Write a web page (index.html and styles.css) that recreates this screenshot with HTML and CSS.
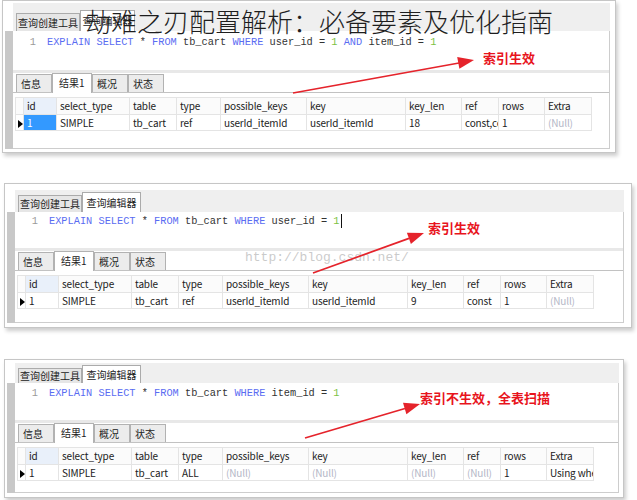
FILE: index.html
```html
<!DOCTYPE html>
<html lang="zh">
<head>
<meta charset="utf-8">
<link rel="stylesheet" href="styles.css">
</head>
<body>
<div class="page">
  <section class="panel p1">
    <div class="tabbar"><span class="tab">查询创建工具</span><span class="tab active">查询编辑器</span></div>
    <div class="side"></div>
    <div class="main">
      <div class="editor"><span class="ln">1</span><span class="code"><b>EXPLAIN</b> <b>SELECT</b> * <b>FROM</b> tb_cart <b>WHERE</b> user_id = <em>1</em> <b>AND</b> item_id = <em>1</em></span></div>
      <div class="rtabs"><span class="rtab">信息</span><span class="rtab active">结果1</span><span class="rtab">概况</span><span class="rtab">状态</span></div>
      <table class="grid">
        <colgroup><col class="c-ind"><col class="c-id"><col class="c-st"><col class="c-tb"><col class="c-ty"><col class="c-pk"><col class="c-key"><col class="c-kl"><col class="c-ref"><col class="c-rows"><col class="c-ex"></colgroup>
        <tr class="hd"><th></th><th class="idh">id</th><th>select_type</th><th>table</th><th>type</th><th>possible_keys</th><th>key</th><th>key_len</th><th>ref</th><th>rows</th><th>Extra</th></tr>
        <tr><td class="ind"><i class="tri"></i></td><td class="sel">1</td><td>SIMPLE</td><td>tb_cart</td><td>ref</td><td>userId_itemId</td><td>userId_itemId</td><td>18</td><td>const,const</td><td>1</td><td class="null">(Null)</td></tr>
      </table>
    </div>
  </section>

  <section class="panel p2">
    <div class="tabbar"><span class="tab">查询创建工具</span><span class="tab active">查询编辑器</span></div>
    <div class="side"></div>
    <div class="main">
      <div class="editor"><span class="ln">1</span><span class="code"><b>EXPLAIN</b> <b>SELECT</b> * <b>FROM</b> tb_cart <b>WHERE</b> user_id = <em>1</em></span><span class="caret"></span></div>
      <div class="rtabs"><span class="rtab">信息</span><span class="rtab active">结果1</span><span class="rtab">概况</span><span class="rtab">状态</span></div>
      <table class="grid">
        <colgroup><col class="c-ind"><col class="c-id"><col class="c-st"><col class="c-tb"><col class="c-ty"><col class="c-pk"><col class="c-key"><col class="c-kl"><col class="c-ref"><col class="c-rows"><col class="c-ex"></colgroup>
        <tr class="hd"><th></th><th class="idh">id</th><th>select_type</th><th>table</th><th>type</th><th>possible_keys</th><th>key</th><th>key_len</th><th>ref</th><th>rows</th><th>Extra</th></tr>
        <tr><td class="ind"><i class="tri"></i></td><td>1</td><td>SIMPLE</td><td>tb_cart</td><td>ref</td><td>userId_itemId</td><td>userId_itemId</td><td>9</td><td>const</td><td>1</td><td class="null">(Null)</td></tr>
      </table>
    </div>
  </section>

  <section class="panel p3">
    <div class="tabbar"><span class="tab">查询创建工具</span><span class="tab active">查询编辑器</span></div>
    <div class="side"></div>
    <div class="main">
      <div class="editor"><span class="ln">1</span><span class="code"><b>EXPLAIN</b> <b>SELECT</b> * <b>FROM</b> tb_cart <b>WHERE</b> item_id = <em>1</em></span></div>
      <div class="rtabs"><span class="rtab">信息</span><span class="rtab active">结果1</span><span class="rtab">概况</span><span class="rtab">状态</span></div>
      <table class="grid">
        <colgroup><col class="c-ind"><col class="c-id"><col class="c-st"><col class="c-tb"><col class="c-ty"><col class="c-pk"><col class="c-key"><col class="c-kl"><col class="c-ref"><col class="c-rows"><col class="c-ex"></colgroup>
        <tr class="hd"><th></th><th class="idh">id</th><th>select_type</th><th>table</th><th>type</th><th>possible_keys</th><th>key</th><th>key_len</th><th>ref</th><th>rows</th><th>Extra</th></tr>
        <tr><td class="ind"><i class="tri"></i></td><td>1</td><td>SIMPLE</td><td>tb_cart</td><td>ALL</td><td class="null">(Null)</td><td class="null">(Null)</td><td class="null">(Null)</td><td class="null">(Null)</td><td>1</td><td>Using where</td></tr>
      </table>
    </div>
  </section>

  <div class="watermark">http://blog.csdn.net/</div>

  <svg class="arrows" width="637" height="500" viewBox="0 0 637 500">
    <line x1="293" y1="93" x2="459" y2="63" />
    <polygon points="474,60 459.4,68.8 457.2,57" />
    <line x1="313" y1="273" x2="409" y2="238.4" />
    <polygon points="424,233 410.9,244.1 406.9,232.8" />
    <line x1="305" y1="438" x2="405" y2="408.5" />
    <polygon points="420,404 406.4,414.3 403,402.7" />
  </svg>

  <span class="note n1">索引生效</span>
  <span class="note n2">索引生效</span>
  <span class="note n3">索引不生效，全表扫描</span>

  <h1 class="title">劫难之刃配置解析：必备要素及优化指南</h1>
</div>
</body>
</html>
```

FILE: styles.css
```css
* { box-sizing: border-box; margin: 0; padding: 0; }
html, body { width: 637px; height: 500px; overflow: hidden; background: #fff; }
body {
  font-family: "Noto Sans CJK SC", "Noto Sans", sans-serif;
  color: #222;
}
.page {
  position: relative;
  width: 637px;
  height: 500px;
  display: flex;
  flex-direction: column;
  align-items: flex-start;
}

/* ---------- panel ---------- */
.panel {
  display: grid;
  grid-template-columns: 8px 1fr;
  grid-template-rows: auto 1fr;
  border: 1px solid #c6c6c6;
  background: #fff;
  box-shadow: 2px 3px 4px rgba(0, 0, 0, 0.2);
  padding: 2px 5px 3px 2px;
  flex: none;
}
.p1 { margin-left: 2px; width: 614px; height: 153px; padding-top: 2px; padding-right: 5px; }
.p2 { margin: 30px 0 0 4px; width: 628px; height: 145px; padding-top: 6px; padding-right: 7px; padding-bottom: 4px; }
.p3 { margin: 31px 0 0 4px; width: 620px; height: 139px; padding-top: 3px; padding-right: 4px; padding-bottom: 4px; }

.tabbar {
  grid-column: 2;
  grid-row: 1;
  display: flex;
  align-items: flex-end;
  padding-left: 3px;
  background: #efefef;
}
.p1 .tabbar { height: 28px; }
.p2 .tabbar { height: 22px; }
.p3 .tabbar { height: 20px; }

.tab {
  display: flex;
  align-items: center;
  justify-content: center;
  width: 64px;
  height: 17px;
  font-size: 10px;
  line-height: 12px;
  border: 1px solid #ababab;
  border-bottom: none;
  background: #e6e6e6;
  color: #222;
}
.tab.active { width: 59px; height: 20px; background: #fff; }
.p1 .tab { height: 18px; }
.p1 .tab.active { width: 55px; height: 21px; }
.p3 .tab { height: 15px; }
.p3 .tab.active { height: 18px; }

.side {
  grid-column: 1;
  grid-row: 2;
  background: #c8c8c8;
}
.main {
  grid-column: 2;
  grid-row: 2;
  border-right: 1px solid #cdcdcd;
  border-bottom: 1px solid #cdcdcd;
  background: #fff;
  display: flex;
  flex-direction: column;
  min-width: 0;
}

/* ---------- editor ---------- */
.editor {
  display: flex;
  align-items: flex-start;
  font-family: "Liberation Mono", monospace;
  font-size: 10.3px;
  line-height: 14px;
  white-space: pre;
  color: #333;
  border-bottom: 3px solid #e8e8e8;
}
.p1 .editor { height: 42px; padding-top: 4px; }
.p2 .editor { height: 39px; padding-top: 2px; }
.p3 .editor { height: 40px; padding-top: 3px; }
.ln { width: 23px; text-align: right; color: #9a9a9a; flex: none; }
.code { margin-left: 11px; }
.code b { font-weight: normal; color: #5a6cf2; }
.code em { font-style: normal; color: #7cc243; }
.caret { display: inline-block; width: 1px; height: 14px; background: #111; margin-left: 1px; }

/* ---------- result tabs ---------- */
.rtabs {
  display: flex;
  align-items: flex-end;
  height: 20px;
  padding-left: 3px;
  border-bottom: 1px solid #c2c2c2;
  flex: none;
}
.rtab {
  display: flex;
  align-items: center;
  width: 36px;
  height: 18px;
  padding-left: 4px;
  font-size: 10px;
  border: 1px solid #b2b2b2;
  border-bottom: none;
  background: #ececec;
  color: #222;
}
.rtab.active {
  width: 40px;
  height: 20px;
  background: #fff;
  margin-bottom: -1px;
  padding-left: 6px;
  padding-bottom: 2px;
}

/* ---------- grid ---------- */
.grid {
  margin: 4px 0 0 2px;
  border-collapse: collapse;
  table-layout: fixed;
  width: 576px;
  font-size: 10px;
  letter-spacing: -0.15px;
  color: #222;
}
.c-ind { width: 8px; }
.c-id { width: 33px; }
.c-st { width: 73px; }
.c-tb { width: 47px; }
.c-ty { width: 44px; }
.c-pk { width: 86px; }
.c-key { width: 99px; }
.c-kl { width: 56px; }
.c-ref { width: 37px; }
.c-rows { width: 46px; }
.c-ex { width: 47px; }

.grid th, .grid td {
  height: 16px;
  padding: 0 0 0 3px;
  text-align: left;
  font-weight: normal;
  white-space: nowrap;
  overflow: hidden;
  border: 1px solid #e4e4e4;
  line-height: 14px;
}
.grid th { height: 17px; background: #fbfbfb; }
.grid th.idh { background: #e9f0fa; }
.grid td.ind { padding: 0 0 0 2px; }
.grid td.sel { background: #3399ff; color: #fff; }
.grid td.null { color: #b3b6c6; }
.tri {
  display: inline-block;
  width: 0;
  height: 0;
  border-left: 5px solid #000;
  border-top: 4px solid transparent;
  border-bottom: 4px solid transparent;
  vertical-align: middle;
}

/* ---------- overlays ---------- */
.watermark {
  position: absolute;
  left: 245px;
  top: 250px;
  font-family: "Liberation Mono", monospace;
  font-size: 13px;
  line-height: 16px;
  color: rgba(150, 150, 150, 0.5);
}
.arrows {
  position: absolute;
  left: 0;
  top: 0;
}
.arrows line { stroke: #e5232b; stroke-width: 1.7; }
.arrows polygon { fill: #e5232b; }

.note {
  position: absolute;
  font-size: 13px;
  line-height: 16px;
  font-weight: 700;
  color: #e8141c;
  white-space: nowrap;
}
.n1 { left: 483px; top: 50px; }
.n2 { left: 428px; top: 220px; }
.n3 { left: 420px; top: 390px; }

.title {
  position: absolute;
  left: 85px;
  top: 6px;
  font-size: 26px;
  line-height: 30px;
  font-weight: 300;
  color: #1e1e1e;
  white-space: nowrap;
}
```
